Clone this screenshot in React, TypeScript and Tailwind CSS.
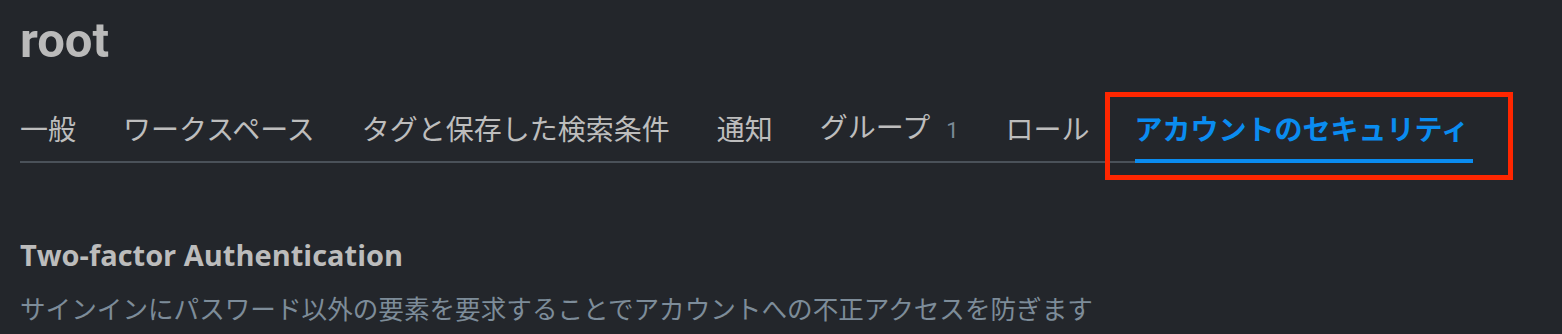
import React from 'react';

const tabs: { label: string; count?: number }[] = [
    { label: '一般' },
    { label: 'ワークスペース' },
    { label: 'タグと保存した検索条件' },
    { label: '通知' },
    { label: 'グループ', count: 1 },
    { label: 'ロール' },
];

const App: React.FC = () => {
    return (
        <div className="min-h-screen w-full bg-[#23262b] font-['Roboto','Noto_Sans_CJK_JP',sans-serif] relative">
            <div className="px-5 pt-[12px]">
                {/* Page title */}
                <h1 className="text-[49px] leading-[58px] font-bold text-[#bababa]">root</h1>

                {/* Settings tabs */}
                <div className="mt-[39px] inline-flex items-end gap-[47px] border-b-2 border-[#4a5159]">
                    {tabs.map((t) => (
                        <div key={t.label} className="flex items-baseline pb-[10px] text-[28px] leading-[40px] text-[#bdbdbd]">
                            <span>{t.label}</span>
                            {t.count !== undefined && (
                                <span className="ml-[16px] text-[22px] text-[#7c8b98]">{t.count}</span>
                            )}
                        </div>
                    ))}
                    <div className="-mb-[2px] -ml-[2px] pb-[8px] pr-[4px] border-b-4 border-[#0a8cf0] text-[28px] leading-[40px] font-bold text-[#0a8cf0]">
                        アカウントのセキュリティ
                    </div>
                </div>

                {/* Two-factor section */}
                <div className="mt-[74px]">
                    <h2 className="font-['Open_Sans',sans-serif] text-[29px] leading-[36px] font-bold text-[#bcbcbc]">Two-factor Authentication</h2>
                    <p className="mt-[19px] text-[25.6px] leading-[36px] text-[#7d8c99]">
                        サインインにパスワード以外の要素を要求することでアカウントへの不正アクセスを防ぎます
                    </p>
                </div>
            </div>

            {/* annotation box */}
            <div className="absolute left-[1105px] top-[92px] w-[408px] h-[88px] border-[5px] border-[#ff2600] pointer-events-none" />
        </div>
    );
};

export default App;
